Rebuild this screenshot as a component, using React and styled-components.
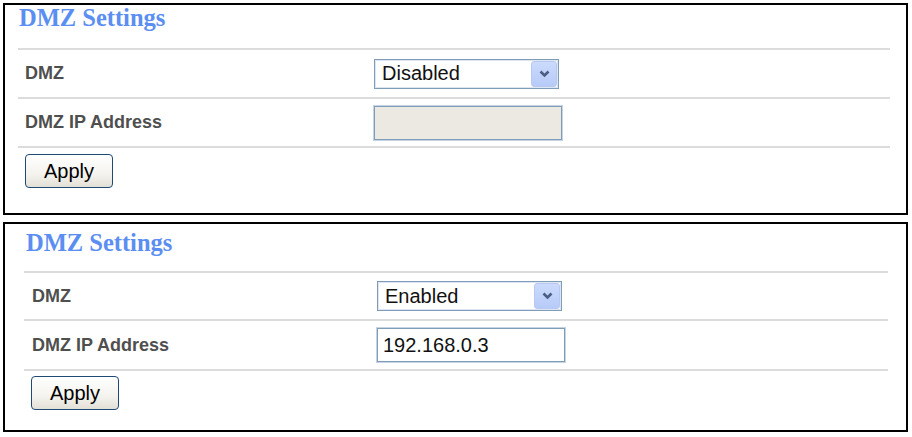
import React from 'react';
import styled, { createGlobalStyle } from 'styled-components';

const GlobalStyle = createGlobalStyle`
  html, body {
    margin: 0;
    padding: 0;
    background: #fff;
  }
  body {
    font-family: "Liberation Sans", Arial, sans-serif;
  }
`;

const Page = styled.div`
  display: flex;
  flex-direction: column;
  gap: 7px;
  padding: 3px 4px 0 3px;
`;

const Panel = styled.section`
  border: 2px solid #000;
  padding: 0 ${(p) => p.$padRight}px ${(p) => p.$padBottom}px ${(p) => p.$padLeft}px;
  display: flex;
  flex-direction: column;
`;

const Title = styled.h2`
  margin: 0;
  height: ${(p) => p.$height}px;
  padding-top: ${(p) => p.$top}px;
  padding-left: ${(p) => p.$indent}px;
  box-sizing: border-box;
  font-family: "Liberation Serif", "Times New Roman", serif;
  font-weight: bold;
  font-size: 24.5px;
  line-height: 26px;
  color: #5b8ef2;
`;

const Row = styled.div`
  display: flex;
  align-items: center;
  height: ${(p) => p.$height || 47}px;
  border-top: 2px solid #dcdcdc;
  padding-left: ${(p) => p.$indent}px;
`;

const Label = styled.div`
  width: ${(p) => p.$width}px;
  font-weight: bold;
  font-size: 18px;
  color: #4f4f4f;
`;

const SelectBox = styled.div`
  display: flex;
  align-items: center;
  justify-content: space-between;
  width: 185px;
  height: 30px;
  box-sizing: border-box;
  border: 1px solid #7f9db9;
  box-shadow: inset 0 0 0 1px #dde6f0;
  background: #fff;
  padding: 0 1px 0 7px;
  font-size: 20px;
  color: #111;
`;

const ArrowButton = styled.div`
  width: 26px;
  height: 26px;
  border-radius: 3px;
  border: 1px solid #b7c9f3;
  background: linear-gradient(#cbdafd, #b7cbf8);
  display: flex;
  align-items: center;
  justify-content: center;
  box-sizing: border-box;
`;

const TextInput = styled.div`
  width: 188px;
  height: 34px;
  box-sizing: border-box;
  border: 1px solid #7f9db9;
  box-shadow: 0 0 0 1px #c6d3e3;
  background: ${(p) => (p.$disabled ? '#ebe9e2' : '#fff')};
  padding: 0 5px;
  display: flex;
  align-items: center;
  font-size: 20px;
  color: #111;
`;

const ButtonRow = styled.div`
  border-top: 2px solid #dcdcdc;
  padding-top: ${(p) => p.$gap}px;
  padding-left: ${(p) => p.$indent}px;
`;

const ApplyButton = styled.button`
  width: 88px;
  height: 34px;
  border: 1px solid #1f4a78;
  border-radius: 4px;
  background: linear-gradient(#ffffff 0%, #f4f3ee 60%, #e2e0d6 100%);
  font-family: "Liberation Sans", Arial, sans-serif;
  font-size: 20px;
  color: #000;
  padding: 0;
`;

function Chevron() {
  return (
    <svg width="11" height="8" viewBox="0 0 11 8">
      <path d="M1.5 1.5 L5.5 5.5 L9.5 1.5" fill="none" stroke="#4a5d82" strokeWidth="2.6" />
    </svg>
  );
}

const panels = [
  {
    mode: 'Disabled',
    ip: '',
    pad: { right: 16, bottom: 25, left: 13 },
    titleHeight: 43,
    titleTop: 0,
    titleIndent: 1,
    rows: [47, 47],
    indent: 7,
    labelWidth: 349,
    btnGap: 6,
    btnIndent: 7,
  },
  {
    mode: 'Enabled',
    ip: '192.168.0.3',
    pad: { right: 18, bottom: 20, left: 19 },
    titleHeight: 47,
    titleTop: 6,
    titleIndent: 2,
    rows: [46, 48],
    indent: 8,
    labelWidth: 345,
    btnGap: 5,
    btnIndent: 7,
  },
];

function DmzPanel({ cfg }) {
  const disabled = cfg.mode === 'Disabled';
  return (
    <Panel $padRight={cfg.pad.right} $padBottom={cfg.pad.bottom} $padLeft={cfg.pad.left}>
      <Title $height={cfg.titleHeight} $top={cfg.titleTop} $indent={cfg.titleIndent}>
        DMZ Settings
      </Title>
      <Row $indent={cfg.indent} $height={cfg.rows[0]}>
        <Label $width={cfg.labelWidth}>DMZ</Label>
        <SelectBox>
          <span>{cfg.mode}</span>
          <ArrowButton>
            <Chevron />
          </ArrowButton>
        </SelectBox>
      </Row>
      <Row $indent={cfg.indent} $height={cfg.rows[1]}>
        <Label $width={cfg.labelWidth}>DMZ IP Address</Label>
        <TextInput $disabled={disabled}>{cfg.ip}</TextInput>
      </Row>
      <ButtonRow $gap={cfg.btnGap} $indent={cfg.btnIndent}>
        <ApplyButton>Apply</ApplyButton>
      </ButtonRow>
    </Panel>
  );
}

export default function App() {
  return (
    <>
      <GlobalStyle />
      <Page>
        {panels.map((cfg) => (
          <DmzPanel key={cfg.mode} cfg={cfg} />
        ))}
      </Page>
    </>
  );
}
